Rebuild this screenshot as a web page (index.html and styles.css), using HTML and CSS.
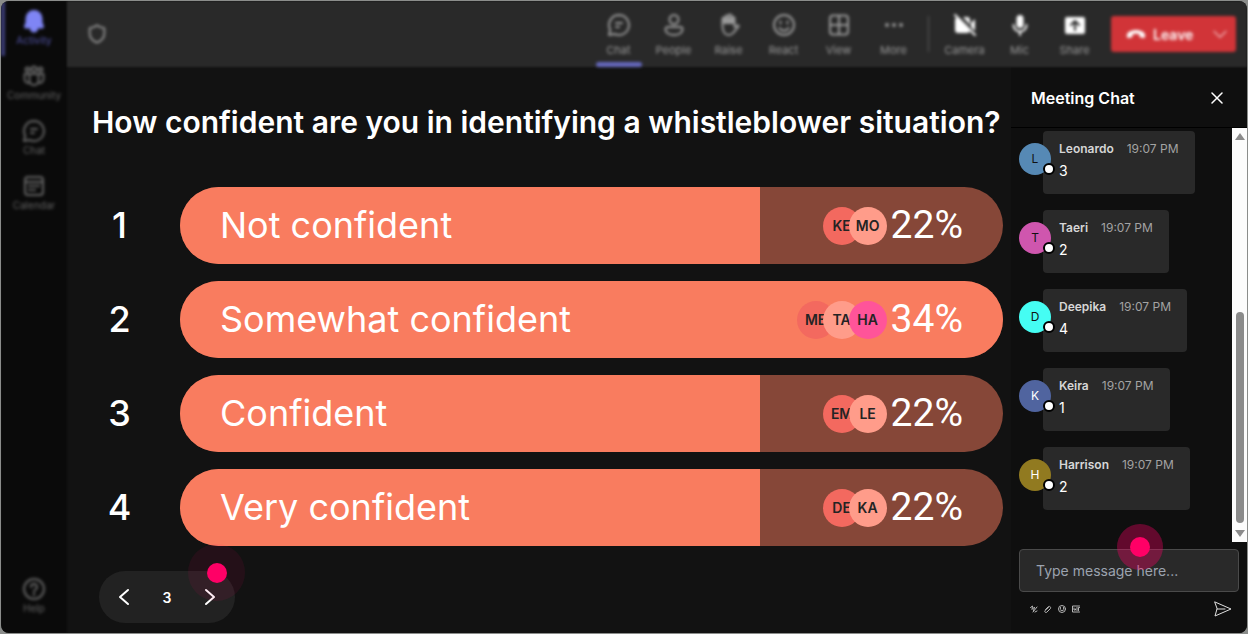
FILE: index.html
```html
<!DOCTYPE html>
<html lang="en">
<head>
    <meta charset="UTF-8">
    <meta name="viewport" content="width=device-width, initial-scale=1.0">
    <title>Meeting poll</title>
    <link rel="stylesheet" href="styles.css">
</head>
<body>
    <div class="app">
        <nav class="sidebar">
            <div class="sidebar-list">
                <a href="#" class="side-item active">
                    <svg viewBox="0 0 24 24" width="24" height="24"><path fill="currentColor" d="M12 2a7.500 7.500 0 0 0-7.500 7.500v4L3 17.300c-.3.700.2 1.200.9 1.200h16.200c.7 0 1.200-.5.900-1.200l-1.500-3.800v-4A7.500 7.500 0 0 0 12 2zM9 19.500a3 3 0 0 0 6 0z"/></svg>
                    <span>Activity</span>
                </a>
                <a href="#" class="side-item">
                    <svg viewBox="0 0 24 24" width="24" height="24"><circle cx="5.500" cy="5.500" r="2"/><circle cx="12" cy="5" r="2.500"/><circle cx="18.500" cy="5.500" r="2"/><path d="M7.500 10h9v6.500a4.500 4.500 0 0 1-9 0zM7.500 10H2.500v5a4 4 0 0 0 5 3.800M16.500 10h5v5a4 4 0 0 1-5 3.800"/></svg>
                    <span>Community</span>
                </a>
                <a href="#" class="side-item">
                    <svg viewBox="0 0 24 24" width="24" height="24"><path d="M12 2a10 10 0 1 1-4.600 18.900L2 22l1.200-5.300A10 10 0 0 1 12 2zM9 10h6M9 14h3"/></svg>
                    <span>Chat</span>
                </a>
                <a href="#" class="side-item">
                    <svg viewBox="0 0 24 24" width="24" height="24"><rect x="3" y="3" width="18" height="18" rx="3"/><path d="M3 8h18M7 12h2M11 12h2M15 12h2M7 16h2M11 16h2"/></svg>
                    <span>Calendar</span>
                </a>
            </div>
            <a href="#" class="side-item">
                <svg viewBox="0 0 24 24" width="24" height="24"><circle cx="12" cy="12" r="10"/><path d="M9 10a3 3 0 1 1 4.500 2.500c-1 .6-1.500 1-1.500 2M12 16.500v1.500"/></svg>
                <span>Help</span>
            </a>
        </nav>

        <div class="main">
            <header class="topbar">
                <svg class="shield" viewBox="0 0 24 24" width="22" height="22"><path d="M12 2.500c2.500 2 5 2.700 8 3v6c0 5-3 8-8 10-5-2-8-5-8-10v-6c3-.3 5.500-1 8-3z"/></svg>
                <div class="tools">
                    <button class="tool selected">
                        <svg viewBox="0 0 24 24" width="24" height="24"><path d="M12 2a10 10 0 1 1-4.600 18.900L2 22l1.200-5.300A10 10 0 0 1 12 2zM9 10h6M9 14h3"/></svg>
                        <span>Chat</span>
                    </button>
                    <button class="tool">
                        <svg viewBox="0 0 24 24" width="24" height="24"><circle cx="12" cy="6.500" r="4.500"/><path d="M5.500 14h13a2 2 0 0 1 2 2c0 4-4 6-8.500 6s-8.500-2-8.500-6a2 2 0 0 1 2-2z"/></svg>
                        <span>People</span>
                    </button>
                    <button class="tool">
                        <svg viewBox="0 0 24 24" width="24" height="24"><path d="M5.500 13V6a1.500 1.500 0 0 1 3 0v4V4a1.500 1.500 0 0 1 3 0v6V3a1.500 1.500 0 0 1 3 0v7V5.500a1.500 1.500 0 0 1 3 0V14l2.500-1.500c1.500-.5 2 .5 1.500 1.200L16 20c-2 2.500-6.500 2.500-8.500 0-1.500-2-2-4-2-7z"/><path fill="currentColor" d="M6 5.500h11V10H6z"/></svg>
                        <span>Raise</span>
                    </button>
                    <button class="tool">
                        <svg viewBox="0 0 24 24" width="24" height="24"><circle cx="12" cy="12" r="10"/><path d="M7.500 15c2 3.500 7 3.500 9 0M8.500 8.500v2M15.500 8.500v2"/></svg>
                        <span>React</span>
                    </button>
                    <button class="tool">
                        <svg viewBox="0 0 24 24" width="24" height="24"><rect x="3" y="2.500" width="18" height="19" rx="3"/><path d="M12 3v18M3 12h18"/></svg>
                        <span>View</span>
                    </button>
                    <button class="tool">
                        <svg viewBox="0 0 24 24" width="24" height="24"><g fill="currentColor" stroke="none"><circle cx="5" cy="12" r="2"/><circle cx="12" cy="12" r="2"/><circle cx="19" cy="12" r="2"/></g></svg>
                        <span>More</span>
                    </button>
                    <span class="divider"></span>
                    <button class="tool device">
                        <svg viewBox="0 0 24 24" width="24" height="24"><path fill="currentColor" stroke="none" d="M5 4l12 13.500a3 3 0 0 1-2.500 2.500H5a3 3 0 0 1-3-3V6zM10 4h4a3 3 0 0 1 3 3v5zM18 10l4-4v12l-4-4z"/><path d="M2 2l20 20"/></svg>
                        <span>Camera</span>
                    </button>
                    <button class="tool device">
                        <svg viewBox="0 0 24 24" width="24" height="24"><rect x="8.500" y="2" width="7" height="13" rx="3.500" fill="currentColor" stroke="none"/><path d="M5.500 12a6.500 6.500 0 0 0 13 0M12 18.500V22"/></svg>
                        <span>Mic</span>
                    </button>
                    <button class="tool device">
                        <svg viewBox="0 0 24 24" width="24" height="24"><rect x="2" y="4" width="20" height="17" rx="2" fill="currentColor" stroke="none"/><path class="cutout" d="M12 17V8M8 12l4-4 4 4"/></svg>
                        <span>Share</span>
                    </button>
                    <button class="leave">
                        <svg viewBox="0 0 24 24" width="22" height="22"><path fill="currentColor" stroke="none" d="M12 7.500c5.500 0 10 2.500 10 6 0 2-.7 3-2 2.800l-3-.6c-.9-.2-1.200-.8-1.300-1.700l-.2-1.700c-2.300-.7-4.700-.7-7 0L8.300 14c-.1.900-.4 1.500-1.300 1.700l-3 .6c-1.300.2-2-.8-2-2.800 0-3.500 4.500-6 10-6z"/></svg>
                        <span>Leave</span>
                        <svg viewBox="0 0 24 24" width="16" height="16"><path d="M3 8l9 9 9-9"/></svg>
                    </button>
                </div>
            </header>

            <div class="content">
                <main class="poll">
                    <h1>How confident are you in identifying a whistleblower situation?</h1>
                    <ol class="options">
                        <li class="option">
                            <span class="rank">1</span>
                            <div class="bar">
                                <div class="fill" style="width: 70.5%"></div>
                                <span class="label">Not confident</span>
                                <span class="voters"><span class="voter red">KE</span><span class="voter peach">MO</span></span>
                                <span class="percent">22%</span>
                            </div>
                        </li>
                        <li class="option">
                            <span class="rank">2</span>
                            <div class="bar">
                                <div class="fill" style="width: 100%"></div>
                                <span class="label">Somewhat confident</span>
                                <span class="voters"><span class="voter red">ME</span><span class="voter peach">TA</span><span class="voter pink">HA</span></span>
                                <span class="percent">34%</span>
                            </div>
                        </li>
                        <li class="option">
                            <span class="rank">3</span>
                            <div class="bar">
                                <div class="fill" style="width: 70.5%"></div>
                                <span class="label">Confident</span>
                                <span class="voters"><span class="voter red">EM</span><span class="voter peach">LE</span></span>
                                <span class="percent">22%</span>
                            </div>
                        </li>
                        <li class="option">
                            <span class="rank">4</span>
                            <div class="bar">
                                <div class="fill" style="width: 70.5%"></div>
                                <span class="label">Very confident</span>
                                <span class="voters"><span class="voter red">DE</span><span class="voter peach">KA</span></span>
                                <span class="percent">22%</span>
                            </div>
                        </li>
                    </ol>
                    <div class="pager">
                        <button aria-label="Previous"><svg viewBox="0 0 16 20" width="16" height="20"><path d="M12 3l-8 7 8 7"/></svg></button>
                        <span>3</span>
                        <button aria-label="Next"><svg viewBox="0 0 16 20" width="16" height="20"><path d="M4 3l8 7-8 7"/></svg></button>
                        <span class="hotspot hotspot-next"></span>
                    </div>
                </main>

                <aside class="chat">
                    <div class="chat-header">
                        <h2>Meeting Chat</h2>
                        <button aria-label="Close"><svg viewBox="0 0 12 12" width="12" height="12"><path d="M1 1l10 10M11 1L1 11"/></svg></button>
                    </div>
                    <div class="chat-body">
                        <ul class="messages">
                            <li class="message">
                                <span class="avatar blue">L</span>
                                <div class="bubble">
                                    <div class="meta"><b>Leonardo</b><time>19:07 PM</time></div>
                                    <p>3</p>
                                </div>
                            </li>
                            <li class="message">
                                <span class="avatar magenta">T</span>
                                <div class="bubble">
                                    <div class="meta"><b>Taeri</b><time>19:07 PM</time></div>
                                    <p>2</p>
                                </div>
                            </li>
                            <li class="message">
                                <span class="avatar cyan">D</span>
                                <div class="bubble">
                                    <div class="meta"><b>Deepika</b><time>19:07 PM</time></div>
                                    <p>4</p>
                                </div>
                            </li>
                            <li class="message">
                                <span class="avatar indigo">K</span>
                                <div class="bubble">
                                    <div class="meta"><b>Keira</b><time>19:07 PM</time></div>
                                    <p>1</p>
                                </div>
                            </li>
                            <li class="message">
                                <span class="avatar olive">H</span>
                                <div class="bubble">
                                    <div class="meta"><b>Harrison</b><time>19:07 PM</time></div>
                                    <p>2</p>
                                </div>
                            </li>
                        </ul>
                        <div class="scrollbar">
                            <svg viewBox="0 0 10 8" width="10" height="8"><path d="M5 0l5 7H0z"/></svg>
                            <div class="thumb-track"><div class="thumb"></div></div>
                            <svg viewBox="0 0 10 8" width="10" height="8"><path d="M5 8l5-7H0z"/></svg>
                        </div>
                    </div>
                    <form class="composer">
                        <input type="text" aria-label="Message" placeholder="Type message here...">
                        <div class="composer-actions">
                            <button type="button" aria-label="Format"><svg viewBox="0 0 16 16" width="8" height="8"><path d="M1 5l4-3-1 7 5-5-2 8M6 14l8-10M10 14l4-2"/></svg></button>
                            <button type="button" aria-label="Attach"><svg viewBox="0 0 16 16" width="8" height="8"><path d="M3 9l6-6a3 3 0 0 1 4 4l-7 7a2 2 0 0 1-4-3l7-6"/></svg></button>
                            <button type="button" aria-label="Emoji"><svg viewBox="0 0 16 16" width="8" height="8"><circle cx="8" cy="8" r="7"/><path d="M4 9c2 3 6 3 8 0M5 5v2M11 5v2"/></svg></button>
                            <button type="button" aria-label="GIF"><svg viewBox="0 0 16 16" width="8" height="8"><path d="M15 2H1v12h14M4 6v4h3V8M10 5v6M13 11V5h2"/></svg></button>
                            <button type="submit" class="send" aria-label="Send"><svg viewBox="0 0 18 16" width="18" height="16"><path d="M1 1l16 7-16 7 2-7zM3 8h8"/></svg></button>
                        </div>
                        <span class="hotspot hotspot-message"></span>
                    </form>
                </aside>
            </div>
        </div>
    </div>
</body>
</html>
```
FILE: styles.css
```css
* {
    box-sizing: border-box;
}
body {
    margin: 0;
    padding: 1px;
    background: #8b8d8b;
    color: #fff;
    font-family: Inter, "Liberation Sans", sans-serif;
}
button {
    padding: 0;
    border: none;
    background: none;
    color: inherit;
    font-family: inherit;
    cursor: pointer;
}
svg {
    display: block;
    flex: none;
    fill: none;
    stroke: currentColor;
    stroke-width: 2;
    stroke-linecap: round;
    stroke-linejoin: round;
}
.app {
    display: flex;
    min-height: calc(100vh - 2px);
    border-radius: 8px;
    overflow: hidden;
    background: #121212;
}

/* sidebar */
.sidebar {
    display: flex;
    flex-direction: column;
    justify-content: space-between;
    width: 66px;
    flex: none;
    padding-bottom: 9px;
    background: #0a0a0a;
    filter: blur(1px);
}
.side-item {
    display: flex;
    flex-direction: column;
    align-items: center;
    height: 55px;
    padding-top: 8px;
    color: #666;
    font-size: 10px;
    line-height: 14px;
    text-decoration: none;
    filter: blur(1px);
}
.side-item.active {
    border-left: 4px solid #3c3d78;
    padding-right: 4px;
    color: #5355a8;
}
.side-item.active svg {
    color: #7f85f5;
}

/* top bar */
.main {
    display: flex;
    flex-direction: column;
    flex: 1;
    min-width: 0;
}
.topbar {
    display: flex;
    align-items: center;
    justify-content: space-between;
    height: 66px;
    padding: 0 11px 0 19px;
    background: #292929;
    filter: blur(1px);
}
.shield {
    color: #949494;
    filter: blur(1px);
}
.tools {
    display: flex;
    align-items: center;
    height: 100%;
    filter: blur(1px);
}
.tool {
    display: flex;
    flex-direction: column;
    align-items: center;
    gap: 6px;
    width: 55px;
    height: 100%;
    padding-top: 12px;
    color: #9a9a9a;
    font-size: 11px;
    line-height: 14px;
}
.tool.selected::after {
    content: "";
    width: 46px;
    height: 5px;
    margin-top: -1px;
    border-radius: 3px;
    background: #6568bd;
}
.tool.device svg {
    color: #fff;
}
.cutout {
    stroke: #292929;
}
.divider {
    width: 1px;
    height: 36px;
    margin: 0 8px 0 7px;
    background: #5c5c5c;
}
.leave {
    display: flex;
    align-items: center;
    gap: 6px;
    width: 125px;
    height: 36px;
    margin-left: 9px;
    padding: 0 8px 0 14px;
    border-radius: 3px;
    background: #d13438;
    font-size: 14px;
    font-weight: 600;
}
.leave svg:last-child {
    margin-left: auto;
    color: #f0b4b6;
}

/* poll */
.content {
    display: flex;
    flex: 1;
}
.poll {
    flex: 1;
    min-width: 0;
    padding: 36px 8px 10px 25px;
}
h1 {
    margin: 0 0 46px;
    font-size: 30px;
    font-weight: 600;
    line-height: 38px;
    white-space: nowrap;
}
.options {
    display: flex;
    flex-direction: column;
    gap: 17px;
    margin: 0;
    padding: 0;
    list-style: none;
}
.option {
    display: flex;
    align-items: center;
    gap: 33px;
}
.rank {
    width: 55px;
    padding-bottom: 2px;
    font-size: 36px;
    font-weight: 500;
    text-align: center;
}
.bar {
    position: relative;
    display: flex;
    align-items: center;
    flex: 1;
    height: 77px;
    padding: 0 40px;
    border-radius: 39px;
    overflow: hidden;
    background: #864738;
    font-size: 36px;
}
.fill {
    position: absolute;
    top: 0;
    left: 0;
    height: 100%;
    background: #f97c5f;
}
.label,
.voters,
.percent {
    position: relative;
}
.label {
    flex: 1;
    padding-bottom: 2px;
}
.percent {
    padding-bottom: 2px;
    font-family: Roboto, "Liberation Sans", sans-serif;
    font-size: 39px;
}
.voters {
    display: flex;
    margin-right: 4px;
}
.voter {
    width: 38px;
    height: 38px;
    border-radius: 50%;
    color: #242424;
    font-size: 14px;
    font-weight: 600;
    line-height: 38px;
    text-align: center;
}
.voter + .voter {
    margin-left: -12px;
}
.red {
    background: #f3695f;
}
.peach {
    background: #ff9c8a;
}
.pink {
    background: #ff5499;
}
.pager {
    position: relative;
    display: flex;
    align-items: center;
    justify-content: space-between;
    width: 136px;
    height: 52px;
    margin: 25px 0 0 7px;
    padding: 0 17px;
    border-radius: 26px;
    background: #222;
    font-size: 14px;
    font-weight: 600;
}
.hotspot {
    position: absolute;
    display: flex;
    align-items: center;
    justify-content: center;
    border-radius: 50%;
    background: rgba(255, 0, 102, 0.35);
}
.hotspot::before {
    content: "";
    width: 20px;
    height: 20px;
    border-radius: 50%;
    background: #ff0066;
}
.hotspot-next {
    top: -27px;
    right: -10px;
    width: 57px;
    height: 57px;
    background: rgba(255, 0, 102, 0.08);
}

/* chat */
.chat {
    display: flex;
    flex-direction: column;
    width: 236px;
    flex: none;
    background: #0f0f0f;
}
.chat-header {
    display: flex;
    align-items: center;
    justify-content: space-between;
    height: 61px;
    padding: 2px 24px 0 20px;
    border-bottom: 1px solid #000;
}
h2 {
    margin: 0;
    font-size: 16px;
    font-weight: 600;
}
.chat-header svg {
    stroke-width: 1.5;
}
.send svg {
    stroke-width: 1;
}
.chat-body {
    display: flex;
    flex: 1;
}
.messages {
    display: flex;
    flex-direction: column;
    gap: 16px;
    flex: 1;
    margin: 0;
    padding: 3px 0 0 8px;
    list-style: none;
}
.message {
    display: flex;
    align-items: flex-start;
}
.avatar {
    position: relative;
    width: 32px;
    height: 32px;
    margin: 12px -8px 0 0;
    border-radius: 50%;
    color: #111;
    font-size: 12px;
    line-height: 32px;
    text-align: center;
}
.avatar::after {
    content: "";
    position: absolute;
    right: -4px;
    bottom: 0;
    width: 8px;
    height: 8px;
    border: 2px solid #000;
    border-radius: 50%;
    background: #fff;
}
.blue {
    background: #5689b5;
}
.magenta {
    background: #cf56ae;
}
.cyan {
    background: #45fdf3;
}
.indigo {
    background: #50649f;
    color: #fff;
}
.olive {
    background: #917a20;
    color: #fff;
}
.bubble {
    height: 63px;
    padding: 9px 16px;
    border-radius: 4px;
    background: #292929;
    font-size: 14px;
    line-height: 20px;
}
.bubble p {
    margin: 3px 0 0;
}
.meta {
    display: flex;
    gap: 13px;
    color: #d6d6d6;
    font-size: 12px;
    line-height: 18px;
}
.meta b {
    font-weight: 600;
}
.meta time {
    color: #a3a3a3;
}
.scrollbar {
    display: flex;
    flex-direction: column;
    align-items: center;
    width: 15px;
    padding: 5px 0;
    background: #fcfcfc;
}
.scrollbar svg {
    fill: #8b8b8b;
    stroke: none;
}
.thumb-track {
    display: flex;
    flex-direction: column;
    justify-content: flex-end;
    flex: 1;
    padding: 6px 0;
}
.thumb {
    width: 8px;
    height: 56%;
    border-radius: 4px;
    background: #8b8b8b;
}
.composer {
    position: relative;
    padding: 7px 8px 16px;
}
.composer input {
    width: 100%;
    height: 43px;
    padding: 0 16px;
    border: 1px solid #4a4a4a;
    border-radius: 4px;
    background: #292929;
    color: #fff;
    font-family: inherit;
    font-size: 14px;
}
.composer input::placeholder {
    color: #9ca3af;
}
.composer-actions {
    display: flex;
    align-items: center;
    gap: 6px;
    padding: 9px 7px 0 11px;
    color: #b5b5b5;
}
.send {
    margin-left: auto;
    color: #e0e0e0;
}
.hotspot-message {
    top: -18px;
    left: 50%;
    width: 46px;
    height: 46px;
    margin-left: -12px;
}
```
